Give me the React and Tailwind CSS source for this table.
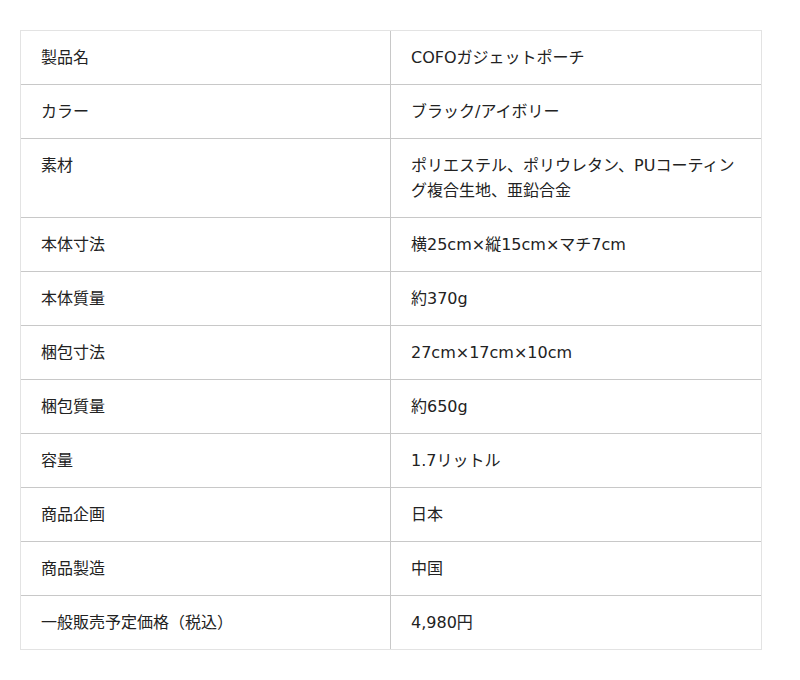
import React from "react";

const specs = [
  ["製品名", "COFOガジェットポーチ"],
  ["カラー", "ブラック/アイボリー"],
  ["素材", "ポリエステル、ポリウレタン、PUコーティング複合生地、亜鉛合金"],
  ["本体寸法", "横25cm×縦15cm×マチ7cm"],
  ["本体質量", "約370g"],
  ["梱包寸法", "27cm×17cm×10cm"],
  ["梱包質量", "約650g"],
  ["容量", "1.7リットル"],
  ["商品企画", "日本"],
  ["商品製造", "中国"],
  ["一般販売予定価格（税込）", "4,980円"],
];

export default function App() {
  return (
    <div
      className="min-h-screen bg-white pt-[30px] px-[20px] text-[16px] leading-[25px] text-[#222]"
      style={{ fontFamily: '"DejaVu Sans", "Noto Sans CJK JP", sans-serif' }}
    >
      <div className="w-[742px] border border-[#e3e3e3]">
        {specs.map(([label, value], i) => (
          <div
            key={label}
            className={
              i === 0
                ? "grid grid-cols-[370px_1fr]"
                : "grid grid-cols-[370px_1fr] border-t border-[#c8c8c8]"
            }
          >
            <div className="py-[14px] px-[20px] border-r border-[#c8c8c8]">{label}</div>
            <div className="py-[14px] px-[20px]">{value}</div>
          </div>
        ))}
      </div>
    </div>
  );
}
